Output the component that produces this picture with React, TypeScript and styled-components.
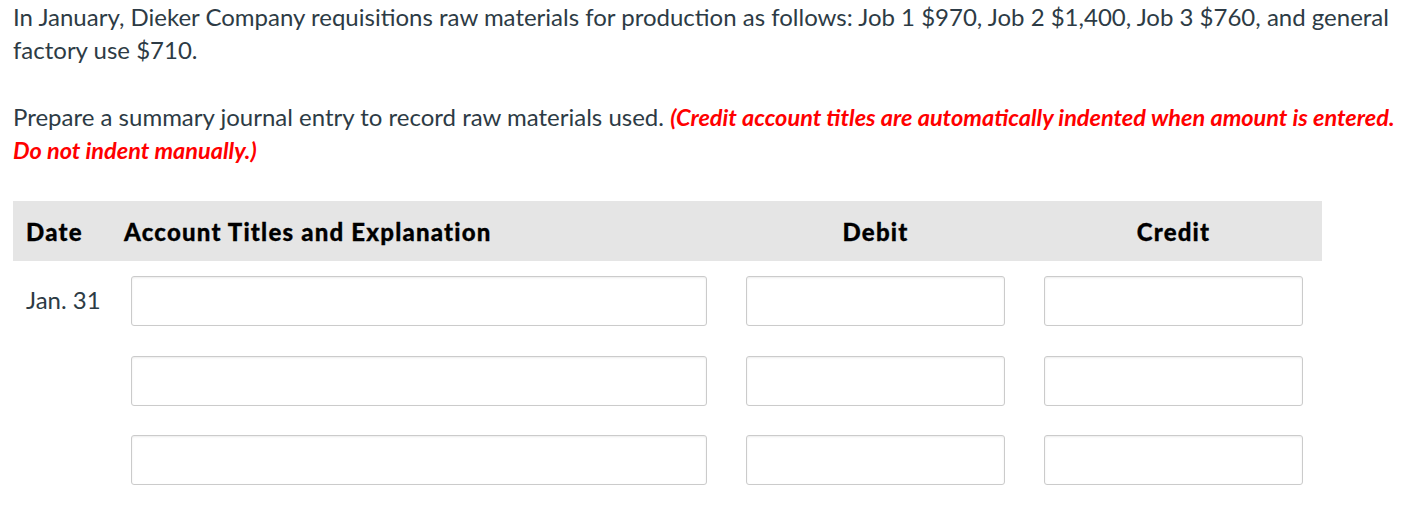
import React from "react";
import styled, { createGlobalStyle } from "styled-components";

const Global = createGlobalStyle`
  html, body { margin: 0; padding: 0; background: #fff; }
  body { font-family: Lato, "Open Sans", sans-serif; color: #2d3b45; }
`;

const Page = styled.div`
  padding: 0 0 0 13px;
  width: 1406px;
  box-sizing: border-box;
`;

const Para = styled.p<{ $gap?: number }>`
  margin: 0 0 ${(p) => p.$gap ?? 0}px 0;
  font-size: 24px;
  line-height: 33px;
`;

const Warn = styled.span`
  color: #ff0000;
  font-weight: 700;
  font-style: italic;
  font-size: 23.5px;
  line-height: 1;
`;

const Table = styled.div`
  width: 1309px;
`;

const HeaderRow = styled.div`
  display: grid;
  grid-template-columns: 59px 583px 259px 259px;
  column-gap: 39px;
  align-items: center;
  height: 60px;
  padding: 0 19px 0 13px;
  background: #e5e5e5;
  font-size: 24px;
  font-weight: 900;
  letter-spacing: 1.2px;
  -webkit-text-stroke: 0.3px #000;
  color: #000;
`;

const HeadCell = styled.div<{ $center?: boolean }>`
  text-align: ${(p) => (p.$center ? "center" : "left")};
  white-space: nowrap;
`;

const Body = styled.div`
  display: flex;
  flex-direction: column;
  gap: 29.5px;
  padding-top: 15px;
`;

const Row = styled.div`
  display: grid;
  grid-template-columns: 66px 576px 259px 259px;
  column-gap: 39px;
  align-items: center;
  padding: 0 19px 0 13px;
`;

const DateCell = styled.div`
  font-size: 24px;
  color: #2d3b45;
  white-space: nowrap;
  padding-bottom: 4px;
`;

const Field = styled.input`
  box-sizing: border-box;
  height: 50px;
  width: 100%;
  border: 1px solid #cbcbcb;
  border-radius: 3px;
  background: #fff;
  box-shadow: inset 0 1px 2px rgba(0, 0, 0, 0.08);
  font-family: inherit;
  font-size: 20px;
  padding: 0 8px;
  outline: none;
`;

const rows = ["Jan. 31", "", ""];

export default function App() {
  return (
    <Page>
      <Global />
      <Para $gap={34}>
        In January, Dieker Company requisitions raw materials for production as follows: Job 1 $970, Job 2 $1,400, Job 3 $760, and general factory use $710.
      </Para>
      <Para $gap={35}>
        Prepare a summary journal entry to record raw materials used.{" "}
        <Warn>(Credit account titles are automatically indented when amount is entered. Do not indent manually.)</Warn>
      </Para>
      <Table>
        <HeaderRow>
          <HeadCell>Date</HeadCell>
          <HeadCell>Account Titles and Explanation</HeadCell>
          <HeadCell $center>Debit</HeadCell>
          <HeadCell $center>Credit</HeadCell>
        </HeaderRow>
        <Body>
          {rows.map((d, i) => (
            <Row key={i}>
              <DateCell>{d}</DateCell>
              <Field type="text" />
              <Field type="text" />
              <Field type="text" />
            </Row>
          ))}
        </Body>
      </Table>
    </Page>
  );
}
